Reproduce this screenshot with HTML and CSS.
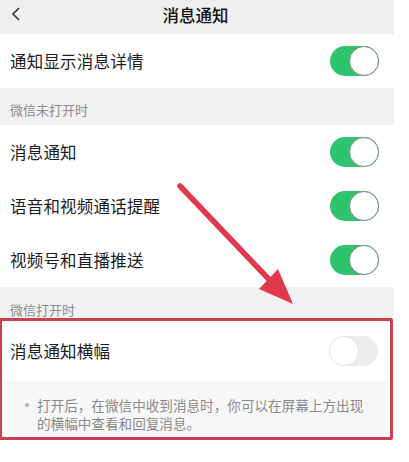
FILE: index.html
```html
<!DOCTYPE html>
<html lang="zh-CN">
<head>
<meta charset="utf-8">
<link rel="stylesheet" href="styles.css">
</head>
<body>
<div class="page">
  <div class="nav">
    <svg class="back" width="12" height="16" viewBox="0 0 12 16"><path d="M9 2 L3 8 L9 14" fill="none" stroke="#333" stroke-width="1.6"/></svg>
    <div class="title">消息通知</div>
  </div>
  <div class="row"><span class="label">通知显示消息详情</span><span class="toggle on"><span class="knob"></span></span></div>
  <div class="section s1">微信未打开时</div>
  <div class="row"><span class="label">消息通知</span><span class="toggle on"><span class="knob"></span></span></div>
  <div class="row"><span class="label">语音和视频通话提醒</span><span class="toggle on"><span class="knob"></span></span></div>
  <div class="row"><span class="label">视频号和直播推送</span><span class="toggle on"><span class="knob"></span></span></div>
  <div class="section s2">微信打开时</div>
  <div class="highlight">
    <div class="row inner"><span class="label">消息通知横幅</span><span class="toggle off"><span class="knob"></span></span></div>
    <div class="desc"><span class="dot"></span><p>打开后，在微信中收到消息时，你可以在屏幕上方出现的横幅中查看和回复消息。</p></div>
  </div>
  <svg class="arrow" width="409" height="462" viewBox="0 0 409 462">
    <line x1="180" y1="186" x2="281" y2="292" stroke="#e0394b" stroke-width="5.5" stroke-linecap="round"/>
    <polygon points="293,304 259,289 278,269" fill="#e0394b"/>
  </svg>
</div>
</body>
</html>
```
FILE: styles.css
```css
* { box-sizing: border-box; }
html, body { margin: 0; padding: 0; background: #fff; }
body { font-family: "Noto Sans CJK SC", "Noto Sans", sans-serif; }
.page { width: 394px; height: 462px; position: relative; background: #fff; }
.nav { height: 34px; background: #efefef; display: flex; align-items: center; justify-content: center; position: relative; }
.back { position: absolute; left: 10px; top: 6px; }
.title { font-size: 16.5px; color: #111; font-weight: 500; margin-right: 3px; margin-top: -4px; }
.row { height: 54px; background: #fff; display: flex; align-items: center; justify-content: space-between; padding: 0 15px 0 10px; }
.label { font-size: 16.5px; color: #1c1c1c; letter-spacing: 0.2px; }
.section { background: #f1f1f1; font-size: 13px; color: #8c8c8c; padding-left: 10px; display: flex; align-items: flex-end; }
.s1 { height: 37px; padding-bottom: 6px; }
.s2 { height: 31px; padding-bottom: 0; line-height: 16px; }
.toggle { width: 49px; height: 30px; border-radius: 15px; position: relative; display: block; }
.toggle.on { background: #2ec46d; }
.toggle.on .knob { position: absolute; right: 0; top: 0; width: 30px; height: 30px; border-radius: 50%; background: #fff; border: 1.5px solid #7d8a84; }
.toggle.off { background: #ececec; }
.toggle.off .knob { position: absolute; left: 0; top: 0; width: 30px; height: 30px; border-radius: 50%; background: #fff; border: 1px solid #e4e4e4; }
.highlight { border: 3px solid #c9414c; border-radius: 2px; width: 394px; margin-left: -1px; padding-bottom: 3px; background: #fff; }
.row.inner { height: 60px; padding: 0 12px 0 8px; }
.desc { margin: 0 3px; background: #f7f7f7; padding: 15px 10px 2px 20px; display: flex; align-items: flex-start; }
.dot { width: 4px; height: 4px; border-radius: 50%; background: #b0b0b0; margin-top: 7px; flex: none; }
.desc p { margin: 0 0 0 8px; max-width: 332px; font-size: 13.6px; line-height: 18px; color: #8a8a8a; }
.arrow { position: absolute; left: 0; top: 0; pointer-events: none; }
```
